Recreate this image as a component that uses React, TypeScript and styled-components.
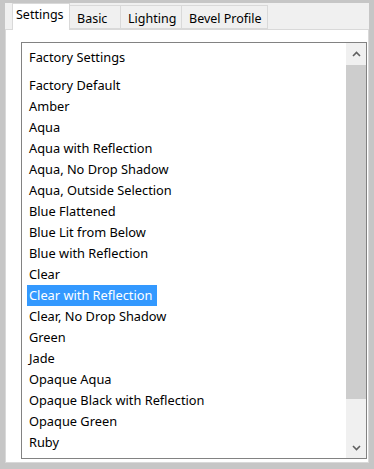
import React from "react";
import styled, { createGlobalStyle } from "styled-components";

const Global = createGlobalStyle`
  html, body { margin: 0; padding: 0; background: #c6c6c6; }
  body { font-family: "Noto Sans", "Open Sans", sans-serif; }
`;

const Frame = styled.div`
  width: 374px;
  height: 469px;
  box-sizing: border-box;
  padding: 3px 5px 6px 5px;
  background: #c6c6c6;
  display: flex;
`;

const Dialog = styled.div`
  flex: 1;
  display: flex;
  flex-direction: column;
  background: #f0f0f0;
`;

const TabStrip = styled.div`
  height: 26px;
  display: flex;
  align-items: flex-end;
  padding-left: 7px;
  position: relative;
  z-index: 1;
`;

const Tab = styled.div<{ $active?: boolean; $w: number }>`
  box-sizing: border-box;
  width: ${(p) => p.$w}px;
  height: ${(p) => (p.$active ? 27 : 24)}px;
  margin-bottom: ${(p) => (p.$active ? -1 : 0)}px;
  padding: ${(p) => (p.$active ? "2px 0 0 3px" : "4px 0 0 7px")};
  margin-left: ${(p) => (p.$active ? 0 : -1)}px;
  background: ${(p) => (p.$active ? "#ffffff" : "#f0f0f0")};
  border: 1px solid #d9d9d9;
  border-bottom: ${(p) => (p.$active ? "none" : "1px solid #d9d9d9")};
  font-size: 12.5px;
  line-height: 18px;
  color: #000;
  white-space: nowrap;
  overflow: hidden;
  &:first-child { margin-left: 0; }
`;

const Panel = styled.div`
  flex: 1;
  background: #ffffff;
  border: 1px solid #d9d9d9;
  padding: 12px 1px 3px 15px;
  display: flex;
`;

const ListBox = styled.div`
  flex: 1;
  border: 1px solid #828282;
  display: flex;
  background: #fff;
  overflow: hidden;
`;

const Items = styled.div`
  flex: 1;
  padding: 4px 0 0 5px;
  display: flex;
  flex-direction: column;
`;

const Row = styled.div<{ $header?: boolean }>`
  height: 21px;
  margin-bottom: ${(p) => (p.$header ? 7 : 0)}px;
  display: flex;
`;

const Label = styled.span<{ $selected?: boolean }>`
  display: inline-block;
  height: 21px;
  padding: 0 5px 0 2px;
  font-size: 12.8px;
  line-height: 21px;
  white-space: nowrap;
  color: ${(p) => (p.$selected ? "#ffffff" : "#000000")};
  background: ${(p) => (p.$selected ? "#3399ff" : "transparent")};
`;

const ScrollBar = styled.div`
  width: 20px;
  background: #f0f0f0;
  display: flex;
  flex-direction: column;
`;

const ArrowButton = styled.div`
  height: 21px;
  display: flex;
  align-items: center;
  justify-content: center;
`;

const Track = styled.div`
  flex: 1;
  display: flex;
  flex-direction: column;
`;

const Thumb = styled.div`
  background: #cdcdcd;
  margin-top: 1px;
`;

const Chevron = ({ up }: { up?: boolean }) => (
  <svg width="9" height="6" viewBox="0 0 9 6">
    <path
      d={up ? "M1 5 L4.5 1.5 L8 5" : "M1 1 L4.5 4.5 L8 1"}
      fill="none"
      stroke="#606060"
      strokeWidth="1.6"
    />
  </svg>
);

const tabs = [
  { label: "Settings", w: 58 },
  { label: "Basic", w: 52 },
  { label: "Lighting", w: 62 },
  { label: "Bevel Profile", w: 87 },
];

const items = [
  "Factory Default",
  "Amber",
  "Aqua",
  "Aqua with Reflection",
  "Aqua, No Drop Shadow",
  "Aqua, Outside Selection",
  "Blue Flattened",
  "Blue Lit from Below",
  "Blue with Reflection",
  "Clear",
  "Clear with Reflection",
  "Clear, No Drop Shadow",
  "Green",
  "Jade",
  "Opaque Aqua",
  "Opaque Black with Reflection",
  "Opaque Green",
  "Ruby",
];

export default function App() {
  return (
    <>
      <Global />
      <Frame>
        <Dialog>
          <TabStrip>
            {tabs.map((t, i) => (
              <Tab key={t.label} $active={i === 0} $w={t.w}>
                {t.label}
              </Tab>
            ))}
          </TabStrip>
          <Panel>
            <ListBox>
              <Items>
                <Row $header>
                  <Label>Factory Settings</Label>
                </Row>
                {items.map((it) => (
                  <Row key={it}>
                    <Label $selected={it === "Clear with Reflection"}>{it}</Label>
                  </Row>
                ))}
              </Items>
              <ScrollBar>
                <ArrowButton>
                  <Chevron up />
                </ArrowButton>
                <Track>
                  <Thumb style={{ height: 334 }} />
                </Track>
                <ArrowButton>
                  <Chevron />
                </ArrowButton>
              </ScrollBar>
            </ListBox>
          </Panel>
        </Dialog>
      </Frame>
    </>
  );
}
